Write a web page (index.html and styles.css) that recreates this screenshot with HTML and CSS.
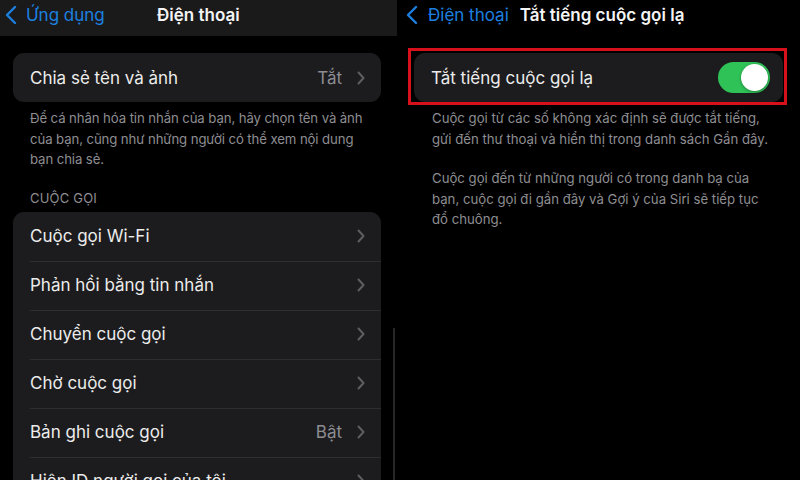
FILE: index.html
```html
<!DOCTYPE html>
<html lang="vi">
<head>
<meta charset="utf-8">
<link rel="stylesheet" href="styles.css">
</head>
<body>
<div class="screen">
  <section class="pane left">
    <header class="nav nav-gray">
      <a class="back">
        <svg class="back-icon" viewBox="0 0 12 20" width="12" height="20"><path d="M10 2 L2 10 L10 18" fill="none" stroke="currentColor" stroke-width="2.4" stroke-linecap="round" stroke-linejoin="round"/></svg>
        <span>Ứng dụng</span>
      </a>
      <h1 class="nav-title center">Điện thoại</h1>
    </header>
    <div class="content">
      <div class="card">
        <div class="row">
          <span class="label">Chia sẻ tên và ảnh</span>
          <span class="value">Tắt</span>
          <svg class="chev" viewBox="0 0 8 14" width="8" height="14"><path d="M1.5 1.5 L6.5 7 L1.5 12.5" fill="none" stroke="currentColor" stroke-width="2" stroke-linecap="round" stroke-linejoin="round"/></svg>
        </div>
      </div>
      <p class="footnote">Để cá nhân hóa tin nhắn của bạn, hãy chọn tên và ảnh của bạn, cũng như những người có thể xem nội dung bạn chia sẻ.</p>
      <div class="section-title">CUỘC GỌI</div>
      <div class="card">
        <div class="row"><span class="label">Cuộc gọi Wi-Fi</span><svg class="chev" viewBox="0 0 8 14" width="8" height="14"><path d="M1.5 1.5 L6.5 7 L1.5 12.5" fill="none" stroke="currentColor" stroke-width="2" stroke-linecap="round" stroke-linejoin="round"/></svg></div>
        <div class="row"><span class="label">Phản hồi bằng tin nhắn</span><svg class="chev" viewBox="0 0 8 14" width="8" height="14"><path d="M1.5 1.5 L6.5 7 L1.5 12.5" fill="none" stroke="currentColor" stroke-width="2" stroke-linecap="round" stroke-linejoin="round"/></svg></div>
        <div class="row"><span class="label">Chuyển cuộc gọi</span><svg class="chev" viewBox="0 0 8 14" width="8" height="14"><path d="M1.5 1.5 L6.5 7 L1.5 12.5" fill="none" stroke="currentColor" stroke-width="2" stroke-linecap="round" stroke-linejoin="round"/></svg></div>
        <div class="row"><span class="label">Chờ cuộc gọi</span><svg class="chev" viewBox="0 0 8 14" width="8" height="14"><path d="M1.5 1.5 L6.5 7 L1.5 12.5" fill="none" stroke="currentColor" stroke-width="2" stroke-linecap="round" stroke-linejoin="round"/></svg></div>
        <div class="row"><span class="label">Bản ghi cuộc gọi</span><span class="value">Bật</span><svg class="chev" viewBox="0 0 8 14" width="8" height="14"><path d="M1.5 1.5 L6.5 7 L1.5 12.5" fill="none" stroke="currentColor" stroke-width="2" stroke-linecap="round" stroke-linejoin="round"/></svg></div>
        <div class="row"><span class="label">Hiện ID người gọi của tôi</span><svg class="chev" viewBox="0 0 8 14" width="8" height="14"><path d="M1.5 1.5 L6.5 7 L1.5 12.5" fill="none" stroke="currentColor" stroke-width="2" stroke-linecap="round" stroke-linejoin="round"/></svg></div>
      </div>
    </div>
    <div class="scrollbar"></div>
  </section>

  <section class="pane right">
    <header class="nav">
      <a class="back">
        <svg class="back-icon" viewBox="0 0 12 20" width="12" height="20"><path d="M10 2 L2 10 L10 18" fill="none" stroke="currentColor" stroke-width="2.4" stroke-linecap="round" stroke-linejoin="round"/></svg>
        <span>Điện thoại</span>
      </a>
      <h1 class="nav-title">Tắt tiếng cuộc gọi lạ</h1>
    </header>
    <div class="content">
      <div class="highlight">
        <div class="card">
          <div class="row">
            <span class="label">Tắt tiếng cuộc gọi lạ</span>
            <span class="toggle on"><span class="knob"></span></span>
          </div>
        </div>
      </div>
      <p class="footnote">Cuộc gọi từ các số không xác định sẽ được tắt tiếng, gửi đến thư thoại và hiển thị trong danh sách Gần đây.</p>
      <p class="footnote">Cuộc gọi đến từ những người có trong danh bạ của bạn, cuộc gọi đi gần đây và Gợi ý của Siri sẽ tiếp tục đổ chuông.</p>
    </div>
  </section>
</div>
</body>
</html>
```

FILE: styles.css
```css
* { box-sizing: border-box; }
html, body { margin: 0; padding: 0; background: #000; }
body {
  font-family: Inter, "Noto Sans", "DejaVu Sans", sans-serif;
  color: #f2f2f2;
  width: 800px;
  height: 480px;
  overflow: hidden;
}
.screen {
  display: flex;
  width: 800px;
  height: 480px;
}
.pane { position: relative; overflow: hidden; }
.left { width: 397px; }
.right { flex: 1; padding-left: 3px; }

.nav {
  height: 36px;
  display: flex;
  align-items: center;
  position: relative;
  padding-bottom: 6px;
}
.nav-gray { background: #1a1a1b; }
.back {
  display: flex;
  align-items: center;
  gap: 9px;
  color: #1c80e0;
  font-size: 17px;
  padding-left: 5px;
}
.right .back { padding-left: 6px; gap: 10px; }
.back-icon { flex: none; }
.nav-title {
  margin: 0;
  font-size: 17px;
  font-weight: 600;
  color: #f4f4f4;
}
.nav-title.center {
  position: absolute;
  left: 157px;
  top: 0;
  line-height: 30px;
}
.right .nav-title { margin-left: 11px; }

.content { padding: 17px 16px 0 13px; }
.right .content { padding: 12px 13px 0 8px; }

.card {
  background: #1c1c1e;
  border-radius: 11px;
  overflow: hidden;
  width: 368px;
}
.right .card { width: 369px; }
.row {
  height: 49px;
  display: flex;
  align-items: center;
  padding: 0 16px 0 17px;
  position: relative;
  font-size: 17px;
}
.row + .row::before {
  content: "";
  position: absolute;
  left: 17px;
  right: 0;
  top: 0;
  height: 1px;
  background: #2e2e31;
}
.label { flex: 1; color: #ececec; }
.value { color: #8d8d92; margin-right: 15px; }
.chev { color: #5e5e62; flex: none; }

.footnote {
  margin: 6px 0 0 0;
  padding: 0 8px 0 17px;
  font-size: 13.2px;
  line-height: 20.5px;
  color: #8e8e92;
}
.left .footnote { letter-spacing: -0.1px; }
.right .footnote { padding: 0 16px 0 24px; margin-top: 3px; }
.right .footnote + .footnote { margin-top: 19px; }

.section-title {
  margin: 20px 0 6px 17px;
  font-size: 13px;
  color: #8e8e92;
  letter-spacing: 0.2px;
}

.highlight {
  border: 3px solid #d8101c;
  padding: 2px 4px 0px 3px;
  width: 379px;
}

.toggle {
  width: 52px;
  height: 31px;
  border-radius: 16px;
  background: #2fc257;
  position: relative;
  flex: none;
  margin-right: -3px;
}
.knob {
  position: absolute;
  right: 2px;
  top: 2px;
  width: 27px;
  height: 27px;
  border-radius: 50%;
  background: #fff;
  box-shadow: 0 1px 3px rgba(0,0,0,0.35);
}

.scrollbar {
  position: absolute;
  left: 393px;
  top: 328px;
  width: 2px;
  height: 152px;
  background: #262626;
}
```
